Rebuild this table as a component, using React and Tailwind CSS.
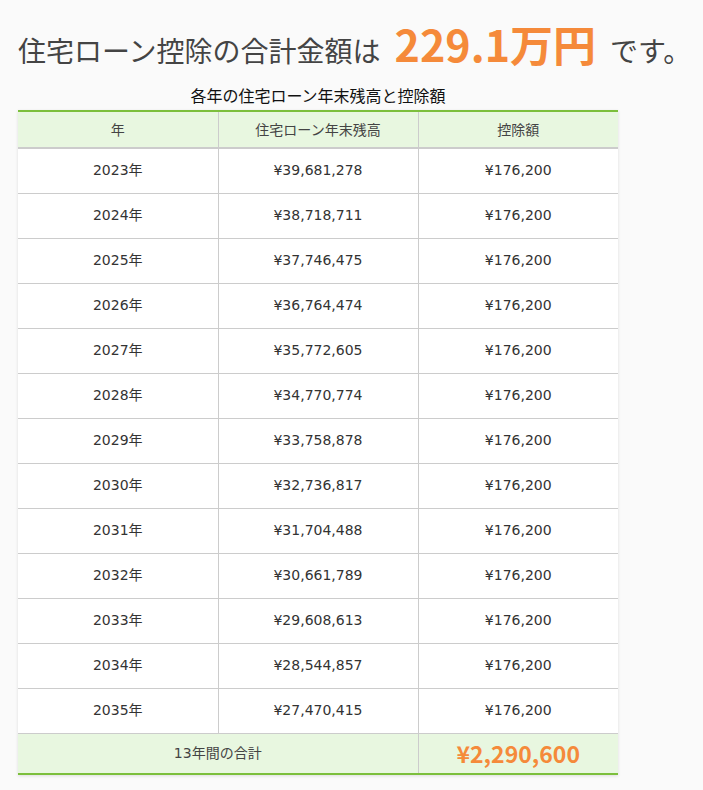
const rows = [
  ['2023年', '¥39,681,278'],
  ['2024年', '¥38,718,711'],
  ['2025年', '¥37,746,475'],
  ['2026年', '¥36,764,474'],
  ['2027年', '¥35,772,605'],
  ['2028年', '¥34,770,774'],
  ['2029年', '¥33,758,878'],
  ['2030年', '¥32,736,817'],
  ['2031年', '¥31,704,488'],
  ['2032年', '¥30,661,789'],
  ['2033年', '¥29,608,613'],
  ['2034年', '¥28,544,857'],
  ['2035年', '¥27,470,415'],
];

const cjk = { fontFamily: '"Noto Sans CJK JP", "Noto Sans", sans-serif' };
const mixed = { fontFamily: '"DejaVu Sans", "Noto Sans CJK JP", sans-serif' };

const App = () => {
  return (
    <main className="min-h-[790px] bg-[#fafafa] px-[18px] pt-[19px] text-[#333]" style={cjk}>
      <h1 className="flex h-[48px] items-baseline whitespace-nowrap text-[28px] leading-[48px] text-[#444]">
        住宅ローン控除の合計金額は
        <span className="mx-[14px] text-[43px] font-bold text-[#f58a3a]">229.1万円</span>
        です。
      </h1>

      <div className="w-[600px]">
        <p className="mt-[16px] mb-[3px] text-center text-[16px] leading-[24px] text-[#111]">
          各年の住宅ローン年末残高と控除額
        </p>
        <table
          className="w-full table-fixed border-collapse bg-white text-[14px] shadow-[0_1px_3px_rgba(0,0,0,0.12)]"
          style={mixed}
        >
          <thead>
            <tr className="h-[37px] border-t-2 border-[#7cbf3c] bg-[#e8f7e0] text-[#444]" style={cjk}>
              <th className="border-r border-b-2 border-[#ccc] font-normal">年</th>
              <th className="border-r border-b-2 border-[#ccc] font-normal">住宅ローン年末残高</th>
              <th className="border-b-2 border-[#ccc] font-normal">控除額</th>
            </tr>
          </thead>
          <tbody>
            {rows.map(([year, balance]) => (
              <tr key={year} className="h-[45px] border-b border-[#ccc] text-center">
                <td className="border-r border-[#ccc]">{year}</td>
                <td className="border-r border-[#ccc]">{balance}</td>
                <td>¥176,200</td>
              </tr>
            ))}
          </tbody>
          <tfoot>
            <tr className="h-[41px] border-b-2 border-[#7cbf3c] bg-[#e8f7e0] text-center">
              <td colSpan={2} className="border-r border-[#ccc] text-[#444]">13年間の合計</td>
              <td className="text-[23px] font-bold text-[#f58a3a]" style={cjk}>¥2,290,600</td>
            </tr>
          </tfoot>
        </table>
      </div>
    </main>
  );
};

export default App;
